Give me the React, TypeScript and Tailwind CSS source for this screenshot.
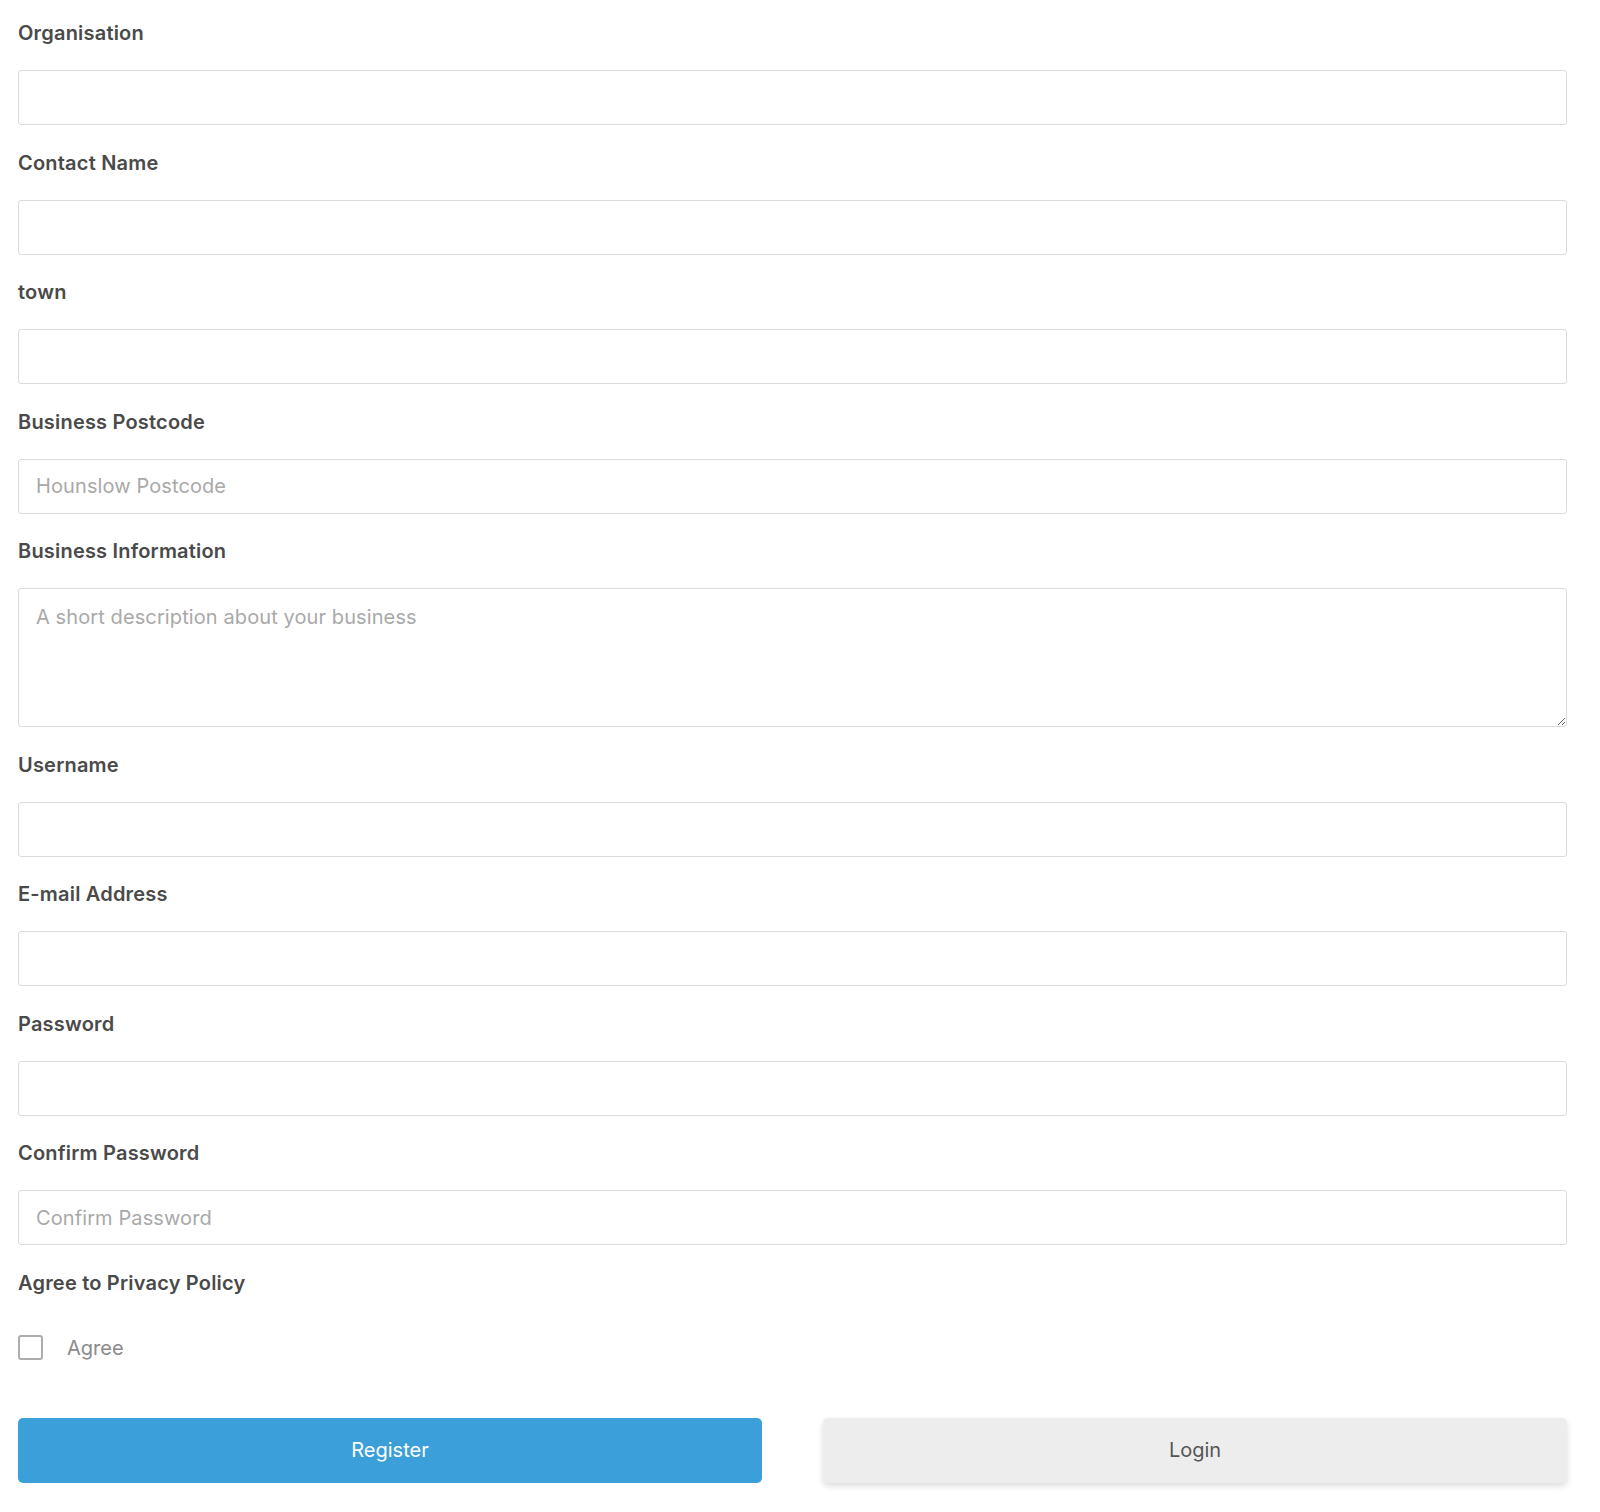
import { useState } from "react";

const fields = [
  { id: "organisation", label: "Organisation", type: "text", placeholder: "" },
  { id: "contactName", label: "Contact Name", type: "text", placeholder: "" },
  { id: "town", label: "town", type: "text", placeholder: "" },
  { id: "postcode", label: "Business Postcode", type: "text", placeholder: "Hounslow Postcode" },
  { id: "info", label: "Business Information", type: "textarea", placeholder: "A short description about your business" },
  { id: "username", label: "Username", type: "text", placeholder: "" },
  { id: "email", label: "E-mail Address", type: "email", placeholder: "" },
  { id: "password", label: "Password", type: "password", placeholder: "" },
  { id: "confirm", label: "Confirm Password", type: "password", placeholder: "Confirm Password" },
];

export default function App() {
  const [values, setValues] = useState<Record<string, string>>({});
  const [agree, setAgree] = useState(false);

  const labelClass =
    "block text-[20px] leading-7 font-semibold tracking-[0.2px] text-[#4a4a4a] mb-[23px]";
  const fieldClass =
    "block w-full rounded-[3px] border border-[#dcdcdc] bg-white px-[17px] text-[20px] tracking-[0.1px] text-[#333] placeholder:text-[#a9a9a9] focus:outline-none";

  return (
    <div className="min-h-screen bg-white px-[18px] pt-[19px] pb-[30px] pr-[33px] font-['Inter',sans-serif]">
      <form onSubmit={(e) => e.preventDefault()}>
        {fields.map((f) => (
          <div key={f.id} className="mb-[23.5px]">
            <label htmlFor={f.id} className={labelClass}>
              {f.label}
            </label>
            {f.type === "textarea" ? (
              <textarea
                id={f.id}
                placeholder={f.placeholder}
                className={`${fieldClass} h-[139px] py-[14px] leading-7`}
                value={values[f.id] ?? ""}
                onChange={(e) => setValues({ ...values, [f.id]: e.target.value })}
              />
            ) : (
              <input
                id={f.id}
                type={f.type}
                placeholder={f.placeholder}
                className={`${fieldClass} h-[55px]`}
                value={values[f.id] ?? ""}
                onChange={(e) => setValues({ ...values, [f.id]: e.target.value })}
              />
            )}
          </div>
        ))}

        {/* Privacy */}
        <div className={labelClass}>Agree to Privacy Policy</div>
        <label className="mt-[36px] flex items-center gap-[24px] cursor-pointer">
          <input
            type="checkbox"
            checked={agree}
            onChange={(e) => setAgree(e.target.checked)}
            className="h-[25px] w-[25px] appearance-none rounded-[3px] border-2 border-[#adadad] bg-white checked:bg-[#3b9fd9] checked:border-[#3b9fd9]"
          />
          <span className="text-[20px] text-[#8a8a8a]">Agree</span>
        </label>

        <div className="mt-[55px] grid grid-cols-2 gap-[61px]">
          <button
            type="submit"
            className="h-[65px] rounded-[5px] bg-[#3b9fd9] text-[20px] text-white"
          >
            Register
          </button>
          <button
            type="button"
            className="h-[65px] rounded-[5px] bg-[#ededed] text-[20px] text-[#555] shadow-[0_3px_6px_rgba(0,0,0,0.14)]"
          >
            Login
          </button>
        </div>
      </form>
    </div>
  );
}
